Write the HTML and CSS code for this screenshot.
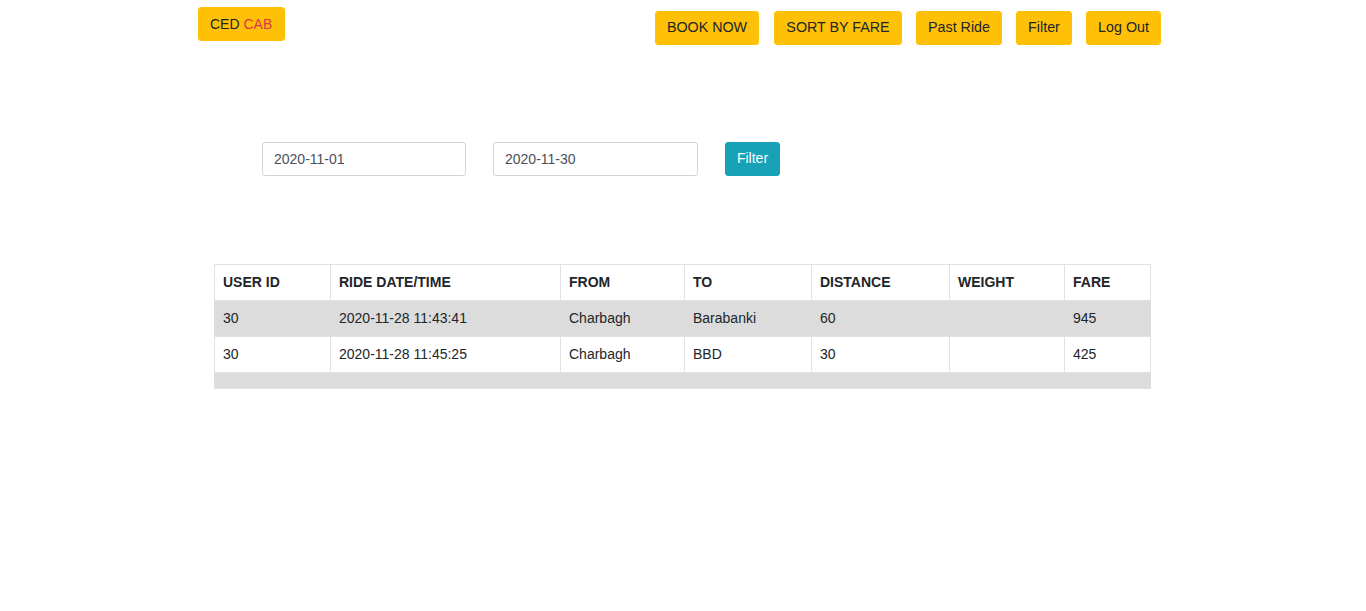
FILE: index.html
```html
<!DOCTYPE html>
<html>
<head>
<meta charset="utf-8">
<title>CED CAB</title>
<link rel="stylesheet" href="styles.css">
</head>
<body>
<header class="topbar">
  <a class="btn btn-warning logo">CED <span class="red">CAB</span></a>
  <nav class="nav">
    <a class="btn btn-warning nav-book">BOOK NOW</a>
    <a class="btn btn-warning nav-sort">SORT BY FARE</a>
    <a class="btn btn-warning nav-past">Past Ride</a>
    <a class="btn btn-warning nav-filter">Filter</a>
    <a class="btn btn-warning nav-logout">Log Out</a>
  </nav>
</header>
<form class="filter-form">
  <input class="date-input first" type="text" value="2020-11-01">
  <input class="date-input second" type="text" value="2020-11-30">
  <button class="btn btn-info" type="button">Filter</button>
</form>
<table class="rides">
  <colgroup>
    <col class="c1"><col class="c2"><col class="c3"><col class="c4"><col class="c5"><col class="c6"><col class="c7">
  </colgroup>
  <thead>
    <tr><th>USER ID</th><th>RIDE DATE/TIME</th><th>FROM</th><th>TO</th><th>DISTANCE</th><th>WEIGHT</th><th>FARE</th></tr>
  </thead>
  <tbody>
    <tr class="odd"><td>30</td><td>2020-11-28 11:43:41</td><td>Charbagh</td><td>Barabanki</td><td>60</td><td></td><td>945</td></tr>
    <tr><td>30</td><td>2020-11-28 11:45:25</td><td>Charbagh</td><td>BBD</td><td>30</td><td></td><td>425</td></tr>
    <tr class="odd empty"><td colspan="7"></td></tr>
  </tbody>
</table>
</body>
</html>
```
FILE: styles.css
```css
* { box-sizing: border-box; }
body {
  margin: 0;
  font-family: "Liberation Sans", Arial, sans-serif;
  font-size: 14px;
  color: #212529;
  background: #fff;
}
.btn {
  display: inline-block;
  font-family: inherit;
  font-size: 14px;
  line-height: 20px;
  padding: 6px 12px;
  border: 1px solid transparent;
  border-radius: 3px;
  text-decoration: none;
  cursor: pointer;
}
.btn-warning { background: #ffc107; border-color: #ffc107; color: #212529; }
.btn-info { background: #17a2b8; border-color: #17a2b8; color: #fff; }
.red { color: #dc3545; }

.topbar {
  display: flex;
  align-items: flex-start;
  padding-left: 198px;
  width: 1161px;
}
.logo { margin-top: 7px; width: 87px; padding: 6px 0 6px 11px; }
.nav { display: flex; margin-left: auto; margin-top: 11px; gap: 14px; }
.nav .btn { padding: 5px 0 7px; text-align: center; font-size: 14.3px; }
.nav-book { width: 104px; margin-right: 1px; }
.nav-sort { width: 128px; }
.nav-past { width: 86px; }
.nav-filter { width: 56px; }
.nav-logout { width: 75px; }

.filter-form {
  display: flex;
  align-items: center;
  padding-left: 262px;
  margin-top: 97px;
}
.date-input {
  height: 34px;
  font-family: inherit;
  font-size: 14px;
  color: #495057;
  padding: 6px 11px;
  border: 1px solid #ced4da;
  border-radius: 3px;
  background: #fff;
}
.date-input.first { width: 204px; }
.date-input.second { width: 205px; margin-left: 27px; }
.filter-form .btn-info { margin-left: 27px; width: 55px; height: 34px; padding: 5px 0 7px; text-align: center; }

.rides {
  border-collapse: collapse;
  width: 936px;
  margin: 88px 0 0 214px;
  table-layout: fixed;
}
.c1 { width: 116px; } .c2 { width: 230px; } .c3 { width: 124px; } .c4 { width: 127px; }
.c5 { width: 138px; } .c6 { width: 115px; } .c7 { width: 86px; }
.rides th, .rides td {
  border: 1px solid #dee2e6;
  padding: 7px 8px;
  line-height: 21px;
  text-align: left;
  vertical-align: top;
}
.rides th { font-weight: bold; }
.rides tbody tr.odd { background: #dcdcdc; }
.rides tbody tr.odd td { border-left-color: #dcdcdc; border-right-color: #dcdcdc; }
.rides tbody tr.empty td { padding: 0; height: 16px; border-left-color: #dcdcdc; border-right-color: #dcdcdc; }
```
